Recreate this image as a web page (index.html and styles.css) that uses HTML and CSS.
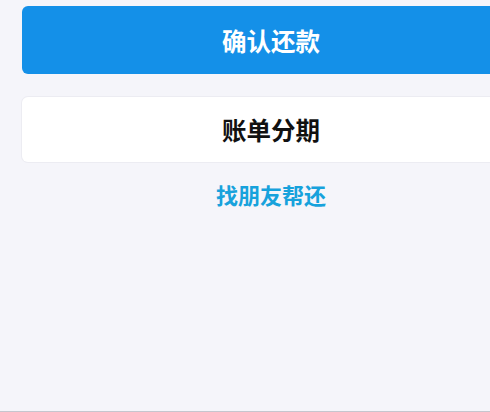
FILE: index.html
```html
<!DOCTYPE html>
<html lang="zh">
<head>
<meta charset="utf-8">
<link rel="stylesheet" href="styles.css">
</head>
<body>
<div class="page">
  <div class="actions">
    <button class="btn btn-primary">确认还款</button>
    <button class="btn btn-secondary">账单分期</button>
    <a class="link">找朋友帮还</a>
  </div>
</div>
</body>
</html>
```
FILE: styles.css
```css
html, body {
  margin: 0;
  padding: 0;
  background: #f5f5fa;
  overflow: hidden;
}
.page {
  width: 490px;
  height: 411px;
  border-bottom: 1px solid #c6c6ce;
  overflow: hidden;
  font-family: "Noto Sans CJK SC", "Noto Sans", sans-serif;
}
.actions {
  width: 498px;
  margin-left: 22px;
  padding-top: 6px;
  display: flex;
  flex-direction: column;
}
.btn {
  border: none;
  font-family: inherit;
  font-weight: 700;
  font-size: 24.5px;
  border-radius: 6px;
  padding: 0;
  display: flex;
  align-items: center;
  justify-content: center;
}
.btn-primary {
  height: 68px;
  background: #1490e8;
  color: #ffffff;
}
.btn-secondary {
  margin-top: 23px;
  height: 65px;
  background: #ffffff;
  color: #111111;
  box-shadow: 0 0 0 1px #ececf2;
}
.link {
  margin-top: 16px;
  text-align: center;
  font-size: 22px;
  font-weight: 700;
  color: #17a2dc;
  line-height: 32px;
}
```
